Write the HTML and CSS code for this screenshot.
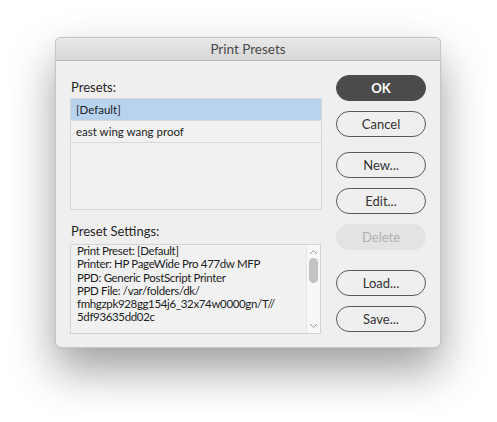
FILE: index.html
```html
<!DOCTYPE html>
<html>
<head>
<meta charset="utf-8">
<link rel="stylesheet" href="styles.css">
</head>
<body>
<div class="dialog">
  <div class="titlebar">Print Presets</div>
  <div class="content">
    <div class="left">
      <div class="label">Presets:</div>
      <div class="list">
        <div class="row selected">[Default]</div>
        <div class="row">east wing wang proof</div>
      </div>
      <div class="label label2">Preset Settings:</div>
      <div class="settings">
        <div class="settings-text">Print Preset: [Default]<br>Printer: HP PageWide Pro 477dw MFP<br>PPD: Generic PostScript Printer<br>PPD File: /var/folders/dk/<br>fmhgzpk928gg154j6_32x74w0000gn/T//<br>5df93635dd02c</div>
        <div class="scrollbar">
          <svg class="arrow" width="9" height="6" viewBox="0 0 9 6"><path d="M1 5 L4.5 1.5 L8 5" fill="none" stroke="#9a9a9a" stroke-width="1"/></svg>
          <div class="thumb"></div>
          <div class="spacer"></div>
          <svg class="arrow" width="9" height="6" viewBox="0 0 9 6"><path d="M1 1 L4.5 4.5 L8 1" fill="none" stroke="#9a9a9a" stroke-width="1"/></svg>
        </div>
      </div>
    </div>
    <div class="right">
      <button class="btn primary">OK</button>
      <button class="btn g1">Cancel</button>
      <button class="btn g2">New...</button>
      <button class="btn g1">Edit...</button>
      <button class="btn disabled g1">Delete</button>
      <button class="btn g3">Load...</button>
      <button class="btn g1">Save...</button>
    </div>
  </div>
</div>
</body>
</html>
```
FILE: styles.css
```css
html, body {
  margin: 0;
  padding: 0;
  background: #ffffff;
}
body {
  font-family: "Lato", "Open Sans", sans-serif;
  width: 497px;
  height: 422px;
  overflow: hidden;
}
.dialog {
  margin: 37px 0 0 55px;
  width: 386px;
  height: 311px;
  box-sizing: border-box;
  background: #efefef;
  border-radius: 6px;
  border: 1px solid #c6c6c6;
  box-shadow: 0 22px 45px rgba(0,0,0,0.38), 0 0 1px rgba(0,0,0,0.2);
  overflow: hidden;
  display: flex;
  flex-direction: column;
}
.titlebar {
  height: 22px;
  line-height: 22px;
  text-align: center;
  font-size: 13.5px;
  color: #4a4a4a;
  background: linear-gradient(#e9e9e9, #d6d6d6);
  border-bottom: 1px solid #b9b9b9;
}
.content {
  display: flex;
  padding: 14px 14px 0 14px;
  gap: 14px;
}
.left {
  width: 252px;
  display: flex;
  flex-direction: column;
}
.label {
  font-size: 13px;
  color: #262626;
  height: 16px;
  line-height: 16px;
  margin: 4px 0 0 1px;
}
.label2 {
  margin-top: 13px;
}
.list {
  margin-top: 3px;
  height: 112px;
  box-sizing: border-box;
  border: 1px solid #d8d8d8;
  background: #f1f1f1;
}
.row {
  height: 22px;
  box-sizing: border-box;
  line-height: 21px;
  padding-left: 5px;
  font-size: 11.5px;
  color: #222;
  border-bottom: 1px solid #d9d9d9;
}
.row.selected {
  background: #b8d3ee;
}
.settings {
  margin-top: 5px;
  width: 251px;
  height: 90px;
  box-sizing: border-box;
  border: 1px solid #d4d4d4;
  background: #f1f1f1;
  display: flex;
}
.settings-text {
  flex: 1;
  margin-top: -1px;
  padding: 0 0 0 6px;
  font-size: 11.5px;
  letter-spacing: -0.35px;
  line-height: 13.3px;
  color: #1c1c1c;
}
.scrollbar {
  width: 14px;
  background: #f8f8f8;
  border-left: 1px solid #e6e6e6;
  display: flex;
  flex-direction: column;
  align-items: center;
  padding: 4px 0 4px 0;
  box-sizing: border-box;
}
.arrow {
  display: block;
  flex: none;
}
.thumb {
  margin-top: 3px;
  width: 9px;
  height: 25px;
  border-radius: 5px;
  background: #c3c3c3;
}
.spacer {
  flex: 1;
}
.right {
  width: 90px;
  display: flex;
  flex-direction: column;
}
.btn {
  width: 90px;
  height: 26px;
  box-sizing: border-box;
  border-radius: 13px;
  border: 1px solid #5a5a5a;
  background: transparent;
  font-family: "Lato", "Open Sans", sans-serif;
  font-size: 13px;
  color: #333;
  padding: 0;
}
.btn.primary {
  background: #4b4b4b;
  border-color: #4b4b4b;
  color: #ffffff;
  font-weight: bold;
}
.btn.disabled {
  background: #e3e3e3;
  border-color: #e3e3e3;
  color: #b0b0b0;
}
.g1 { margin-top: 10px; }
.g2 { margin-top: 15px; }
.g3 { margin-top: 20px; }
```
